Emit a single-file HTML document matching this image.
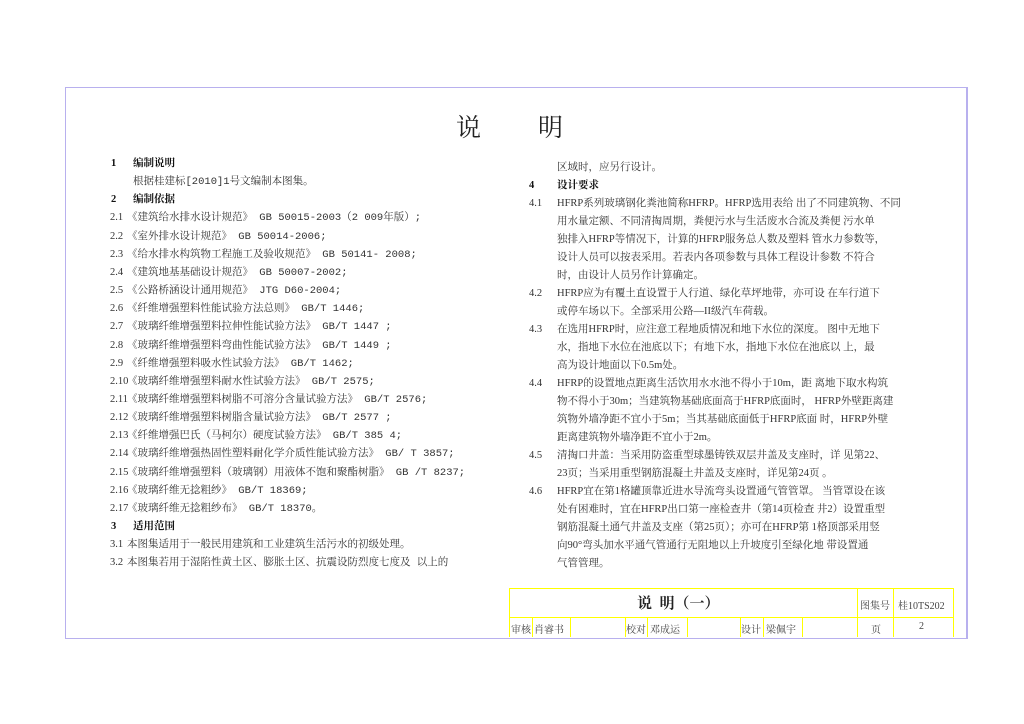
<!DOCTYPE html><html><head><meta charset="utf-8"><style>
body{margin:0;background:#fff;width:1024px;height:724px;position:relative;overflow:hidden;font-family:"Liberation Serif","Noto Serif CJK SC",serif;color:#333}
.f{position:absolute;left:65px;top:87px;width:900px;height:550px;border:1px solid #b8b0ee;border-right:2px solid #b8b0ee}
.l{position:absolute;font-size:10.5px;white-space:nowrap;line-height:12px}
.m{font-family:"Liberation Mono","Noto Serif CJK SC",monospace}
.b{font-weight:bold;color:#111}
.t{position:absolute;font-size:25px;color:#222;font-family:"Noto Serif CJK SC",serif}
.y{position:absolute;background:#ffff00}
.c{position:absolute;font-size:10px;color:#444}
</style></head><body>
<div class="f"></div>
<div class="t" style="left:456px;top:108px">说</div>
<div class="t" style="left:538px;top:108px">明</div>
<div id="L"></div>
<script>
var L=[["1","编制说明",1],["","根据桂建标[2010]1号文编制本图集。",0],["2","编制依据",1],
["2.1","《建筑给水排水设计规范》 GB 50015-2003（2 009年版）;"],["2.2","《室外排水设计规范》 GB 50014-2006;"],["2.3","《给水排水构筑物工程施工及验收规范》 GB 50141- 2008;"],["2.4","《建筑地基基础设计规范》 GB 50007-2002;"],["2.5","《公路桥涵设计通用规范》 JTG D60-2004;"],["2.6","《纤维增强塑料性能试验方法总则》 GB/T 1446;"],["2.7","《玻璃纤维增强塑料拉伸性能试验方法》 GB/T 1447 ;"],["2.8","《玻璃纤维增强塑料弯曲性能试验方法》 GB/T 1449 ;"],["2.9","《纤维增强塑料吸水性试验方法》 GB/T 1462;"],["2.10","《玻璃纤维增强塑料耐水性试验方法》 GB/T 2575;"],["2.11","《玻璃纤维增强塑料树脂不可溶分含量试验方法》 GB/T 2576;"],["2.12","《玻璃纤维增强塑料树脂含量试验方法》 GB/T 2577 ;"],["2.13","《纤维增强巴氏（马柯尔）硬度试验方法》 GB/T 385 4;"],["2.14","《玻璃纤维增强热固性塑料耐化学介质性能试验方法》 GB/ T 3857;"],["2.15","《玻璃纤维增强塑料（玻璃钢）用液体不饱和聚酯树脂》 GB /T 8237;"],["2.16","《玻璃纤维无捻粗纱》 GB/T 18369;"],["2.17","《玻璃纤维无捻粗纱布》 GB/T 18370。"],["3","适用范围",1],["3.1","本图集适用于一般民用建筑和工业建筑生活污水的初级处理。"],["3.2","本图集若用于湿陷性黄土区、膨胀土区、抗震设防烈度七度及 以上的"]];
var R=[["","区域时，应另行设计。"],["4","设计要求",1],["4.1","HFRP系列玻璃钢化粪池简称HFRP。HFRP选用表给 出了不同建筑物、不同"],["","用水量定额、不同清掏周期，粪便污水与生活废水合流及粪便 污水单"],["","独排入HFRP等情况下，计算的HFRP服务总人数及塑料 管水力参数等，"],["","设计人员可以按表采用。若表内各项参数与具体工程设计参数 不符合"],["","时，由设计人员另作计算确定。"],["4.2","HFRP应为有覆土直设置于人行道、绿化草坪地带，亦可设 在车行道下"],["","或停车场以下。全部采用公路—II级汽车荷载。"],["4.3","在选用HFRP时，应注意工程地质情况和地下水位的深度。 图中无地下"],["","水，指地下水位在池底以下；有地下水，指地下水位在池底以 上，最"],["","高为设计地面以下0.5m处。"],["4.4","HFRP的设置地点距离生活饮用水水池不得小于10m，距 离地下取水构筑"],["","物不得小于30m；当建筑物基础底面高于HFRP底面时， HFRP外壁距离建"],["","筑物外墙净距不宜小于5m；当其基础底面低于HFRP底面 时，HFRP外壁"],["","距离建筑物外墙净距不宜小于2m。"],["4.5","清掏口井盖：当采用防盗重型球墨铸铁双层井盖及支座时，详 见第22、"],["","23页；当采用重型钢筋混凝土井盖及支座时，详见第24页 。"],["4.6","HFRP宜在第1格罐顶靠近进水导流弯头设置通气管管罩。 当管罩设在该"],["","处有困难时，宜在HFRP出口第一座检查井（第14页检查 井2）设置重型"],["","钢筋混凝土通气井盖及支座（第25页）；亦可在HFRP第 1格顶部采用竖"],["","向90°弯头加水平通气管通行无阻地以上升坡度引至绿化地 带设置通"],["","气管管理。"]];
var h="";
L.forEach(function(a,i){var y=158+i*18.15;var b=a[2]?" b":"";h+='<div class="l'+b+'" style="left:'+(a[0].length==1?111:110)+'px;top:'+y+'px">'+a[0]+'</div><div class="l m'+b+'" style="left:'+(a[2]?133:(a[0]?127:133))+'px;top:'+y+'px">'+a[1]+'</div>';});
R.forEach(function(a,i){var y=162+i*18;var b=a[2]?" b":"";h+='<div class="l'+b+'" style="left:529px;top:'+y+'px">'+a[0]+'</div><div class="l'+b+'" style="left:557px;top:'+y+'px">'+a[1]+'</div>';});
document.getElementById("L").innerHTML=h;
</script>
<div class="y" style="left:509px;top:588px;width:445px;height:1px"></div>
<div class="y" style="left:509px;top:617px;width:445px;height:1px"></div>
<div class="y" style="left:509px;top:588px;width:1px;height:49px"></div>
<div class="y" style="left:857px;top:588px;width:1px;height:49px"></div>
<div class="y" style="left:893px;top:588px;width:1px;height:49px"></div>
<div class="y" style="left:953px;top:588px;width:1px;height:49px"></div>
<div class="y" style="left:532px;top:617px;width:1px;height:20px"></div>
<div class="y" style="left:570px;top:617px;width:1px;height:20px"></div>
<div class="y" style="left:625px;top:617px;width:1px;height:20px"></div>
<div class="y" style="left:647px;top:617px;width:1px;height:20px"></div>
<div class="y" style="left:687px;top:617px;width:1px;height:20px"></div>
<div class="y" style="left:740px;top:617px;width:1px;height:20px"></div>
<div class="y" style="left:763px;top:617px;width:1px;height:20px"></div>
<div class="y" style="left:802px;top:617px;width:1px;height:20px"></div>
<div class="c" style="left:637px;top:592px;font-size:15px;color:#222;font-weight:bold">说&nbsp;&nbsp;明（一）</div>
<div class="c" style="left:860px;top:597px">图集号</div>
<div class="c" style="left:898px;top:597px">桂10TS202</div>
<div class="c" style="left:511px;top:621px">审核</div>
<div class="c" style="left:534px;top:621px">肖睿书</div>
<div class="c" style="left:626px;top:621px">校对</div>
<div class="c" style="left:650px;top:621px">邓成运</div>
<div class="c" style="left:741px;top:621px">设计</div>
<div class="c" style="left:766px;top:621px">梁佩宇</div>
<div class="c" style="left:871px;top:621px">页</div>
<div class="c" style="left:919px;top:621px">2</div>
</body></html>
